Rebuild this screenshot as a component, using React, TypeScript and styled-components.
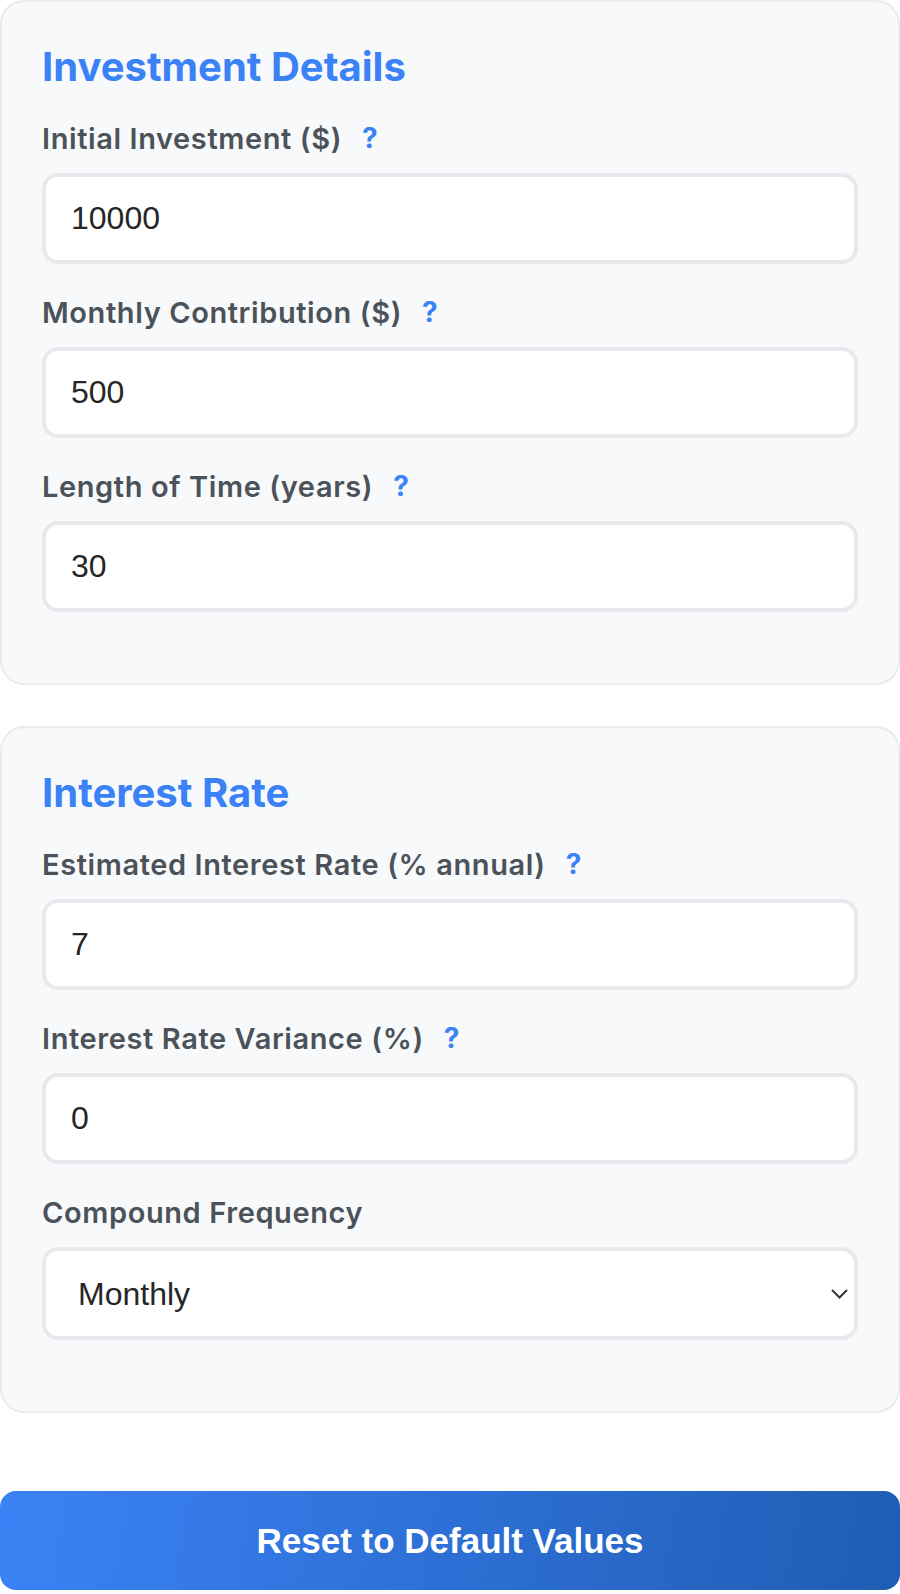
import { useState } from "react";
import styled, { createGlobalStyle } from "styled-components";

const GlobalStyle = createGlobalStyle`
  body {
    margin: 0;
    background: #ffffff;
    font-family: Inter, "Noto Sans", sans-serif;
  }
  * {
    box-sizing: border-box;
  }
`;

interface Field {
  key: string;
  label: string;
  help?: boolean;
}

const detailFields: Field[] = [
  { key: "initial", label: "Initial Investment ($)", help: true },
  { key: "monthly", label: "Monthly Contribution ($)", help: true },
  { key: "years", label: "Length of Time (years)", help: true },
];

const rateFields: Field[] = [
  { key: "rate", label: "Estimated Interest Rate (% annual)", help: true },
  { key: "variance", label: "Interest Rate Variance (%)", help: true },
];

const defaults: Record<string, string> = {
  initial: "10000",
  monthly: "500",
  years: "30",
  rate: "7",
  variance: "0",
  frequency: "Monthly",
};

function App() {
  const [values, setValues] = useState<Record<string, string>>(defaults);

  const update = (key: string, value: string) => {
    setValues({ ...values, [key]: value });
  };

  const renderField = (f: Field) => (
    <FieldGroup key={f.key}>
      <Label htmlFor={f.key}>
        {f.label}
        {f.help ? <HelpMark>?</HelpMark> : null}
      </Label>
      <Input
        id={f.key}
        type="number"
        value={values[f.key]}
        onChange={(e) => update(f.key, e.target.value)}
      />
    </FieldGroup>
  );

  return (
    <Page>
      <GlobalStyle />
      <Card>
        <SectionTitle>Investment Details</SectionTitle>
        {detailFields.map(renderField)}
      </Card>

      <Card>
        <SectionTitle>Interest Rate</SectionTitle>
        {rateFields.map(renderField)}
        <FieldGroup>
          <Label htmlFor="frequency">Compound Frequency</Label>
          <SelectWrap>
            <Select
              id="frequency"
              value={values.frequency}
              onChange={(e) => update("frequency", e.target.value)}
            >
              <option>Daily</option>
              <option>Monthly</option>
              <option>Quarterly</option>
              <option>Annually</option>
            </Select>
            <Chevron width="17" height="10" viewBox="0 0 17 10">
              <polyline
                points="1,1 8.5,8.5 16,1"
                fill="none"
                stroke="#333"
                strokeWidth="2"
              />
            </Chevron>
          </SelectWrap>
        </FieldGroup>
      </Card>

      <ResetButton onClick={() => setValues(defaults)}>
        Reset to Default Values
      </ResetButton>
    </Page>
  );
}

export default App;

const Page = styled.div`
  width: 900px;
  display: flex;
  flex-direction: column;
  gap: 41px;
`;

const Card = styled.section`
  background: #f8f9fa;
  border: 2px solid #e9ecef;
  border-radius: 24px;
  padding: 40px;
`;

const SectionTitle = styled.h2`
  margin: 0 0 30px;
  font-size: 40px;
  line-height: 49px;
  font-weight: 700;
  color: #3b82f6;
`;

const FieldGroup = styled.div`
  margin-bottom: 31px;
`;

const Label = styled.label`
  display: flex;
  align-items: center;
  margin-bottom: 17px;
  font-size: 29px;
  line-height: 35px;
  font-weight: 600;
  letter-spacing: 0.6px;
  color: #4b5259;
`;

const HelpMark = styled.span`
  margin-left: 20px;
  font-size: 28px;
  font-weight: 700;
  color: #3b82f6;
  cursor: help;
`;

const Input = styled.input`
  display: block;
  width: 816px;
  height: 91px;
  padding: 0 25px;
  border: 4px solid #e7e9ec;
  border-radius: 16px;
  background: #ffffff;
  font-family: "Liberation Sans", Arial, sans-serif;
  font-size: 32px;
  color: #262626;
  outline: none;
  -moz-appearance: textfield;

  &::-webkit-outer-spin-button,
  &::-webkit-inner-spin-button {
    -webkit-appearance: none;
    margin: 0;
  }
`;

const SelectWrap = styled.div`
  position: relative;
  width: 816px;
`;

const Select = styled.select`
  display: block;
  width: 100%;
  height: 93px;
  padding: 0 32px;
  border: 4px solid #e7e9ec;
  border-radius: 16px;
  background: #ffffff;
  font-family: "Liberation Sans", Arial, sans-serif;
  font-size: 32px;
  color: #262626;
  appearance: none;
  -webkit-appearance: none;
  outline: none;
`;

const Chevron = styled.svg`
  position: absolute;
  right: 10px;
  top: 42px;
  pointer-events: none;
`;

const ResetButton = styled.button`
  margin-top: 37px;
  width: 900px;
  height: 99px;
  border: none;
  border-radius: 16px;
  background: linear-gradient(100deg, #3b82f6 0%, #1f5db4 100%);
  color: #ffffff;
  font-family: "Liberation Sans", Arial, sans-serif;
  font-size: 35px;
  font-weight: 700;
  cursor: pointer;
`;
